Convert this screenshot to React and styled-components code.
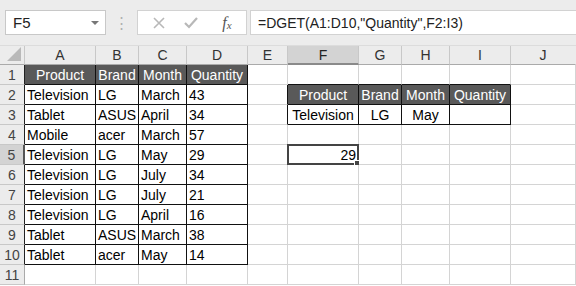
import React from 'react'
import styled, { createGlobalStyle } from 'styled-components'

const GlobalStyle = createGlobalStyle`
  html, body {
    margin: 0;
    padding: 0;
    background: #ffffff;
    font-family: "Liberation Sans", Arial, sans-serif;
  }
`

const columns = ['A', 'B', 'C', 'D', 'E', 'F', 'G', 'H', 'I', 'J']
const widths = [25, 71, 43, 48, 61, 40, 71, 43, 48, 61, 65]

// A1:D10
const data = [
  ['Product', 'Brand', 'Month', 'Quantity'],
  ['Television', 'LG', 'March', '43'],
  ['Tablet', 'ASUS', 'April', '34'],
  ['Mobile', 'acer', 'March', '57'],
  ['Television', 'LG', 'May', '29'],
  ['Television', 'LG', 'July', '34'],
  ['Television', 'LG', 'July', '21'],
  ['Television', 'LG', 'April', '16'],
  ['Tablet', 'ASUS', 'March', '38'],
  ['Tablet', 'acer', 'May', '14']
]

// F2:I3 criteria
const criteria = [
  ['Product', 'Brand', 'Month', 'Quantity'],
  ['Television', 'LG', 'May', '']
]

function cellFor(r, c) {
  // r: 1-based row, c: 0-based col (0 = A)
  if (r >= 1 && r <= 10 && c <= 3) {
    return {
      text: data[r - 1][c],
      boxed: true,
      head: r === 1,
      align: r === 1 ? 'center' : 'left'
    }
  }
  if ((r === 2 || r === 3) && c >= 5 && c <= 8) {
    return {
      text: criteria[r - 2][c - 5],
      boxed: true,
      head: r === 2,
      align: 'center'
    }
  }
  if (r === 5 && c === 5) return { text: '29', align: 'right', selected: true }
  return { text: '', align: 'left' }
}

export default function App() {
  const rows = []
  for (let r = 1; r <= 11; r++) rows.push(r)

  return (
    <Page>
      <GlobalStyle />
      <FormulaBar>
        <NameBox>
          <span>F5</span>
          <Caret />
        </NameBox>
        <Dots>⋮</Dots>
        <ButtonBox>
          <svg width="14" height="14" viewBox="0 0 14 14">
            <path d="M2 2 L12 12 M12 2 L2 12" stroke="#b8b8b8" strokeWidth="1.6" />
          </svg>
          <svg width="16" height="14" viewBox="0 0 16 14">
            <path d="M2 7 L6 11 L14 2" stroke="#b8b8b8" strokeWidth="2.2" fill="none" />
          </svg>
          <Fx>
            f<sub>x</sub>
          </Fx>
        </ButtonBox>
        <FormulaInput>=DGET(A1:D10,"Quantity",F2:I3)</FormulaInput>
      </FormulaBar>
      <Grid $cols={widths}>
        <Corner>
          <svg width="14" height="14" viewBox="0 0 14 14">
            <polygon points="14,0 14,14 0,14" fill="#b9b9b9" />
          </svg>
        </Corner>
        {columns.map((col, i) => (
          <ColHeader key={col} $active={col === 'F'} $last={i === columns.length - 1}>
            {col}
          </ColHeader>
        ))}
        {rows.map((r) => (
          <React.Fragment key={r}>
            <RowHeader $active={r === 5} $edge={r <= 10}>
              {r}
            </RowHeader>
            {columns.map((col, c) => {
              const cell = cellFor(r, c)
              const nextBoxed = cellFor(r, c + 1).boxed
              const belowBoxed = cellFor(r + 1, c).boxed
              return (
                <Cell
                  key={col}
                  $boxed={cell.boxed}
                  $head={cell.head}
                  $align={cell.align}
                  $darkRight={cell.boxed || nextBoxed}
                  $darkBottom={cell.boxed || belowBoxed}
                >
                  {cell.text}
                  {cell.selected && (
                    <Selection>
                      <Handle />
                    </Selection>
                  )}
                </Cell>
              )
            })}
          </React.Fragment>
        ))}
      </Grid>
    </Page>
  )
}

const Page = styled.div`
  width: 576px;
  height: 286px;
  overflow: hidden;
  background: #ffffff;
`

const FormulaBar = styled.div`
  display: flex;
  align-items: center;
  height: 46px;
  padding: 0 0 0 5px;
  box-sizing: border-box;
  background: #ececec;
  border-bottom: 1px solid #dcdcdc;
`

const NameBox = styled.div`
  display: flex;
  align-items: center;
  justify-content: space-between;
  width: 101px;
  height: 25px;
  box-sizing: border-box;
  padding: 0 6px 0 7px;
  background: #ffffff;
  border: 1px solid #c8c8c8;
  font-size: 15px;
  color: #222;
`

const Caret = styled.div`
  width: 0;
  height: 0;
  border-left: 4px solid transparent;
  border-right: 4px solid transparent;
  border-top: 4px solid #777;
`

const Dots = styled.div`
  width: 31px;
  text-align: center;
  color: #b0b0b0;
  font-size: 15px;
`

const ButtonBox = styled.div`
  display: flex;
  align-items: center;
  justify-content: space-around;
  width: 110px;
  height: 25px;
  box-sizing: border-box;
  padding: 0 6px 0 6px;
  background: #ffffff;
  border: 1px solid #d2d2d2;
`

const Fx = styled.span`
  font-family: "Liberation Serif", "Times New Roman", serif;
  font-style: italic;
  font-size: 16px;
  color: #555;
  margin-left: 6px;

  sub {
    font-size: 11px;
    vertical-align: -1px;
  }
`

const FormulaInput = styled.div`
  flex: 1;
  display: flex;
  align-items: center;
  height: 25px;
  margin-left: 3px;
  padding-left: 7px;
  box-sizing: border-box;
  background: #ffffff;
  border: 1px solid #d2d2d2;
  border-right: none;
  font-size: 14px;
  color: #222;
  white-space: nowrap;
`

const Grid = styled.div`
  display: grid;
  grid-template-columns: ${(p) => p.$cols.map((w) => `${w}px`).join(' ')};
  grid-template-rows: 19px repeat(11, 20px);
`

const Corner = styled.div`
  display: flex;
  align-items: flex-end;
  justify-content: flex-end;
  padding: 0 3px 3px 0;
  background: #ececec;
  border-right: 1px solid #c8c8c8;
  border-bottom: 1px solid #aaaaaa;
`

const ColHeader = styled.div`
  display: flex;
  align-items: center;
  justify-content: center;
  font-size: 14px;
  color: ${(p) => (p.$active ? '#222' : '#333')};
  background: ${(p) => (p.$active ? '#d3d3d3' : '#ececec')};
  border-right: 1px solid ${(p) => (p.$last ? '#ececec' : '#c8c8c8')};
  border-bottom: ${(p) => (p.$active ? '2px solid #8a8a8a' : '1px solid #aaaaaa')};
`

const RowHeader = styled.div`
  display: flex;
  align-items: center;
  justify-content: center;
  font-size: 14px;
  color: #444;
  background: ${(p) => (p.$active ? '#d3d3d3' : '#ececec')};
  border-bottom: 1px solid #c8c8c8;
  border-right: ${(p) =>
    p.$active ? '2px solid #555' : p.$edge ? '1px solid #222' : '1px solid #aaaaaa'};
`

const Cell = styled.div`
  position: relative;
  display: flex;
  align-items: center;
  justify-content: ${(p) =>
    p.$align === 'center' ? 'center' : p.$align === 'right' ? 'flex-end' : 'flex-start'};
  padding: 0 2px;
  overflow: visible;
  white-space: nowrap;
  font-size: 14px;
  color: ${(p) => (p.$head ? '#ffffff' : '#000000')};
  background: ${(p) => (p.$head ? '#595959' : '#ffffff')};
  border-right: 1px solid ${(p) => (p.$darkRight ? '#111' : '#d4d4d4')};
  border-bottom: 1px solid ${(p) => (p.$darkBottom ? '#111' : '#d4d4d4')};
`

const Selection = styled.div`
  position: absolute;
  left: -1px;
  top: -1px;
  right: -1px;
  bottom: -1px;
  border: 2px solid #444;
  pointer-events: none;
`

const Handle = styled.div`
  position: absolute;
  right: -5px;
  bottom: -5px;
  width: 6px;
  height: 6px;
  background: #444;
  border: 1px solid #ffffff;
`
